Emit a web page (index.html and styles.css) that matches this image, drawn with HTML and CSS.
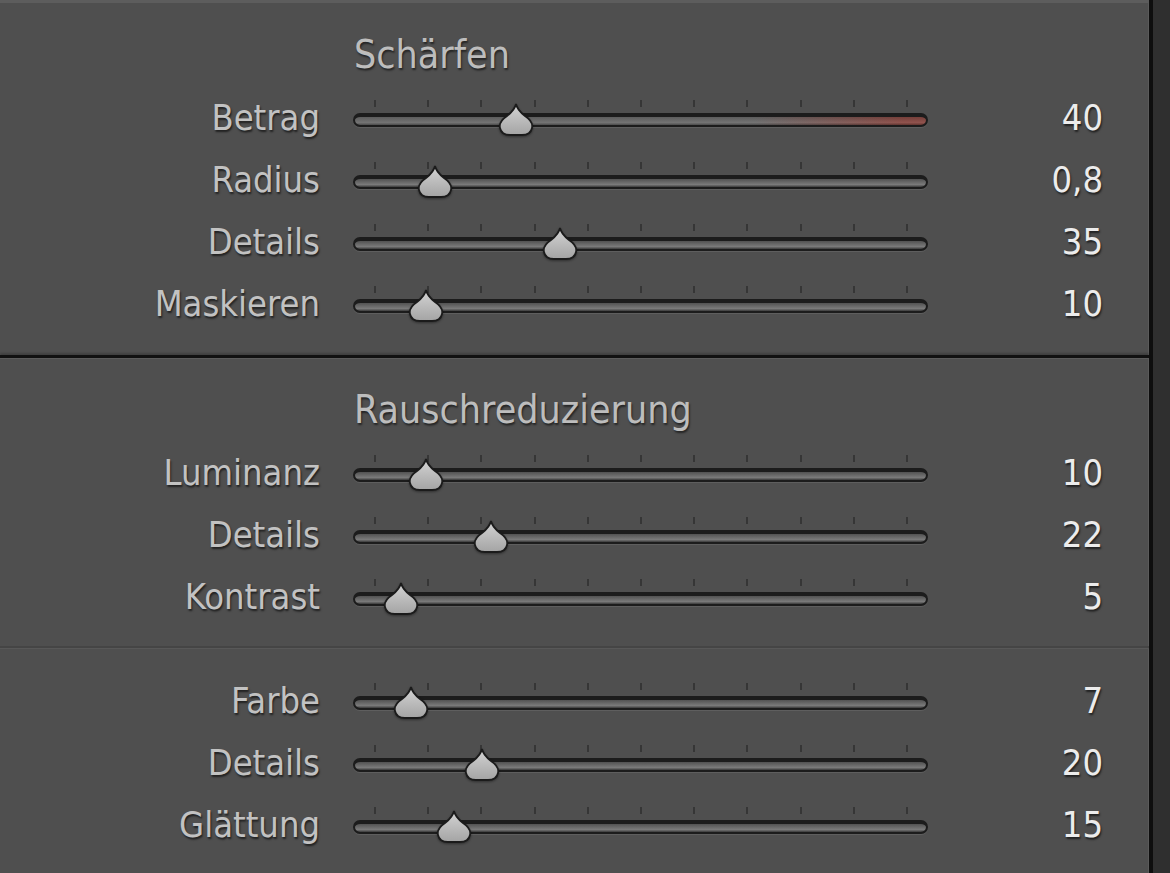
FILE: index.html
```html
<!DOCTYPE html>
<html lang="de">

<head>
    <meta charset="utf-8">
    <title>Details</title>
    <link rel="stylesheet" href="styles.css">
</head>

<body>
    <svg class="defs" width="0" height="0">
        <defs>
            <linearGradient id="thumb-fill" x1="0" y1="0" x2="0" y2="1">
                <stop offset="0" stop-color="#d4d4d4" />
                <stop offset="1" stop-color="#a4a4a4" />
            </linearGradient>
            <symbol id="thumb" viewBox="0 0 36 34">
                <path d="M18 1 C19 6 22 9 27 13 C33 17 35 21 34 25 C33 30 29 32 24 32 L12 32 C7 32 3 30 2 25 C1 21 3 17 9 13 C14 9 17 6 18 1 Z"
                    fill="url(#thumb-fill)" stroke="#1b1b1b" stroke-width="1.8" />
            </symbol>
        </defs>
    </svg>

    <div class="panel">
        <section class="group">
            <h2 class="group-title">Schärfen</h2>
            <div class="row">
                <span class="label">Betrag</span>
                <div class="slider">
                    <div class="ticks"></div>
                    <div class="track track-warm"></div>
                    <svg class="thumb" style="left: 28.3%"><use href="#thumb" /></svg>
                </div>
                <span class="value">40</span>
            </div>
            <div class="row">
                <span class="label">Radius</span>
                <div class="slider">
                    <div class="ticks"></div>
                    <div class="track"></div>
                    <svg class="thumb" style="left: 14.3%"><use href="#thumb" /></svg>
                </div>
                <span class="value">0,8</span>
            </div>
            <div class="row">
                <span class="label">Details</span>
                <div class="slider">
                    <div class="ticks"></div>
                    <div class="track"></div>
                    <svg class="thumb" style="left: 36%"><use href="#thumb" /></svg>
                </div>
                <span class="value">35</span>
            </div>
            <div class="row">
                <span class="label">Maskieren</span>
                <div class="slider">
                    <div class="ticks"></div>
                    <div class="track"></div>
                    <svg class="thumb" style="left: 12.7%"><use href="#thumb" /></svg>
                </div>
                <span class="value">10</span>
            </div>
        </section>

        <section class="group">
            <h2 class="group-title">Rauschreduzierung</h2>
            <div class="row">
                <span class="label">Luminanz</span>
                <div class="slider">
                    <div class="ticks"></div>
                    <div class="track"></div>
                    <svg class="thumb" style="left: 12.7%"><use href="#thumb" /></svg>
                </div>
                <span class="value">10</span>
            </div>
            <div class="row">
                <span class="label">Details</span>
                <div class="slider">
                    <div class="ticks"></div>
                    <div class="track"></div>
                    <svg class="thumb" style="left: 24%"><use href="#thumb" /></svg>
                </div>
                <span class="value">22</span>
            </div>
            <div class="row">
                <span class="label">Kontrast</span>
                <div class="slider">
                    <div class="ticks"></div>
                    <div class="track"></div>
                    <svg class="thumb" style="left: 8.3%"><use href="#thumb" /></svg>
                </div>
                <span class="value">5</span>
            </div>

            <div class="subgroup">
                <div class="row">
                    <span class="label">Farbe</span>
                    <div class="slider">
                        <div class="ticks"></div>
                        <div class="track"></div>
                        <svg class="thumb" style="left: 10.1%"><use href="#thumb" /></svg>
                    </div>
                    <span class="value">7</span>
                </div>
                <div class="row">
                    <span class="label">Details</span>
                    <div class="slider">
                        <div class="ticks"></div>
                        <div class="track"></div>
                        <svg class="thumb" style="left: 22.4%"><use href="#thumb" /></svg>
                    </div>
                    <span class="value">20</span>
                </div>
                <div class="row">
                    <span class="label">Glättung</span>
                    <div class="slider">
                        <div class="ticks"></div>
                        <div class="track"></div>
                        <svg class="thumb" style="left: 17.6%"><use href="#thumb" /></svg>
                    </div>
                    <span class="value">15</span>
                </div>
            </div>
        </section>
    </div>
</body>

</html>
```

FILE: styles.css
```css
body {
    margin: 0;
    background-color: #2f2f2f;
    font-family: "DejaVu Sans Condensed", "DejaVu Sans", sans-serif;
    font-stretch: semi-condensed;
}

.defs {
    position: absolute;
}

.panel {
    width: 1149px;
    height: 873px;
    overflow: hidden;
    background-color: #4f4f4f;
    border-right: 4px solid #0e0e0e;
    box-shadow: inset -1px 0 #5b5b5b;
}

.group {
    padding: 30px 0 18px 0;
}

.group:first-child {
    border-top: 3px solid #5d5d5d;
}

.group + .group {
    border-top: 3px solid #111;
    box-shadow: inset 0 1px #5c5c5c, 0 -2px 2px rgba(0, 0, 0, 0.2);
}

.group-title {
    margin: 0 0 12px 0;
    padding-left: 354px;
    font-size: 39px;
    line-height: 44px;
    font-weight: normal;
    color: #bdbdbd;
    text-shadow: 1px 2px 2px rgba(0, 0, 0, 0.55);
}

.subgroup {
    margin-top: 16px;
    padding-top: 24px;
    border-top: 2px solid #454545;
    box-shadow: inset 0 1px #585858;
}

.row {
    display: grid;
    grid-template-columns: 320px 575px 142px;
    column-gap: 33px;
    height: 62px;
    align-items: center;
}

.label,
.value {
    font-size: 36px;
    line-height: 40px;
    text-align: right;
    margin-top: -4px;
    text-shadow: 1px 2px 2px rgba(0, 0, 0, 0.6);
}

.label {
    color: #c2c2c2;
}

.value {
    color: #ececec;
}

/* slider: tick marks above a sunken track, drop-shaped thumb on top */
.slider {
    position: relative;
    align-self: stretch;
}

.ticks {
    height: 7px;
    margin: 11px 20px 6px 21px;
    background: repeating-linear-gradient(90deg, #363636 0 2px, transparent 2px 53.2px);
}

.track {
    height: 14px;
    box-sizing: border-box;
    border: 2px solid #1c1c1c;
    border-top-width: 4px;
    border-radius: 7px;
    background: linear-gradient(#525252, #7a7a7a 70%, #3a3a3a);
    box-shadow: 0 1px 0 #5e5e5e;
}

.track-warm {
    background:
        linear-gradient(rgba(0, 0, 0, 0.15), rgba(255, 255, 255, 0.05) 70%, rgba(0, 0, 0, 0.3)),
        linear-gradient(90deg, #6c6c6c 70%, #8a4a44 96%);
}

.thumb {
    position: absolute;
    top: 14px;
    width: 36px;
    height: 34px;
    transform: translateX(-50%);
    filter: drop-shadow(0 1px 1px rgba(0, 0, 0, 0.4));
}
```
